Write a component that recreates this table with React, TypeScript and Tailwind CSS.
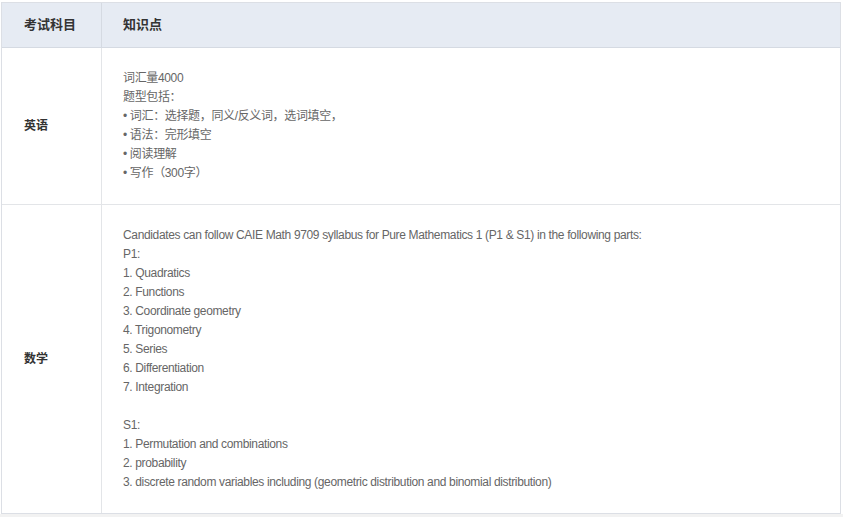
const englishLines = [
  '词汇量4000',
  '题型包括：',
  '• 词汇：选择题，同义/反义词，选词填空，',
  '• 语法：完形填空',
  '• 阅读理解',
  '• 写作（300字）',
]

const mathLines = [
  'Candidates can follow CAIE Math 9709 syllabus for Pure Mathematics 1 (P1 & S1) in the following parts:',
  'P1:',
  '1. Quadratics',
  '2. Functions',
  '3. Coordinate geometry',
  '4. Trigonometry',
  '5. Series',
  '6. Differentiation',
  '7. Integration',
  '',
  'S1:',
  '1. Permutation and combinations',
  '2. probability',
  '3. discrete random variables including (geometric distribution and binomial distribution)',
]

const rows = [
  { subject: '英语', lines: englishLines },
  { subject: '数学', lines: mathLines },
]

const font = "font-['Liberation_Sans','Noto_Sans_CJK_SC',sans-serif]"

export default function App() {
  return (
    <div className={`w-[843px] h-[518px] bg-white pt-[2px] pl-[1px] ${font}`}>
      <div className="w-[840px] border border-[#dcdfe5]">
        {/* header */}
        <div className="grid grid-cols-[100px_1fr] h-[45px] bg-[#e6ebf3] border-b border-[#d5dae2] text-[13px] font-bold text-[#333]">
          <div className="flex items-center pl-[22px] border-r border-[#d5dae2]">考试科目</div>
          <div className="flex items-center pl-[21px]">知识点</div>
        </div>
        {rows.map((row, i) => (
          <div
            key={row.subject}
            className={`grid grid-cols-[100px_1fr] ${i > 0 ? 'border-t border-[#e3e5e8]' : ''}`}
          >
            <div className="flex items-center pl-[22px] border-r border-[#e3e5e8] text-[12px] font-bold text-[#333]">
              {row.subject}
            </div>
            <div className="pl-[21px] pt-[21px] pb-[21px] text-[12px] leading-[19px] tracking-[-0.35px] text-[#666]">
              {row.lines.map((line, j) => (
                <div key={j} className="h-[19px] whitespace-pre">{line}</div>
              ))}
            </div>
          </div>
        ))}
      </div>
      <div className="h-[3px] bg-[#f2f2f2] -ml-[1px]" />
    </div>
  )
}
